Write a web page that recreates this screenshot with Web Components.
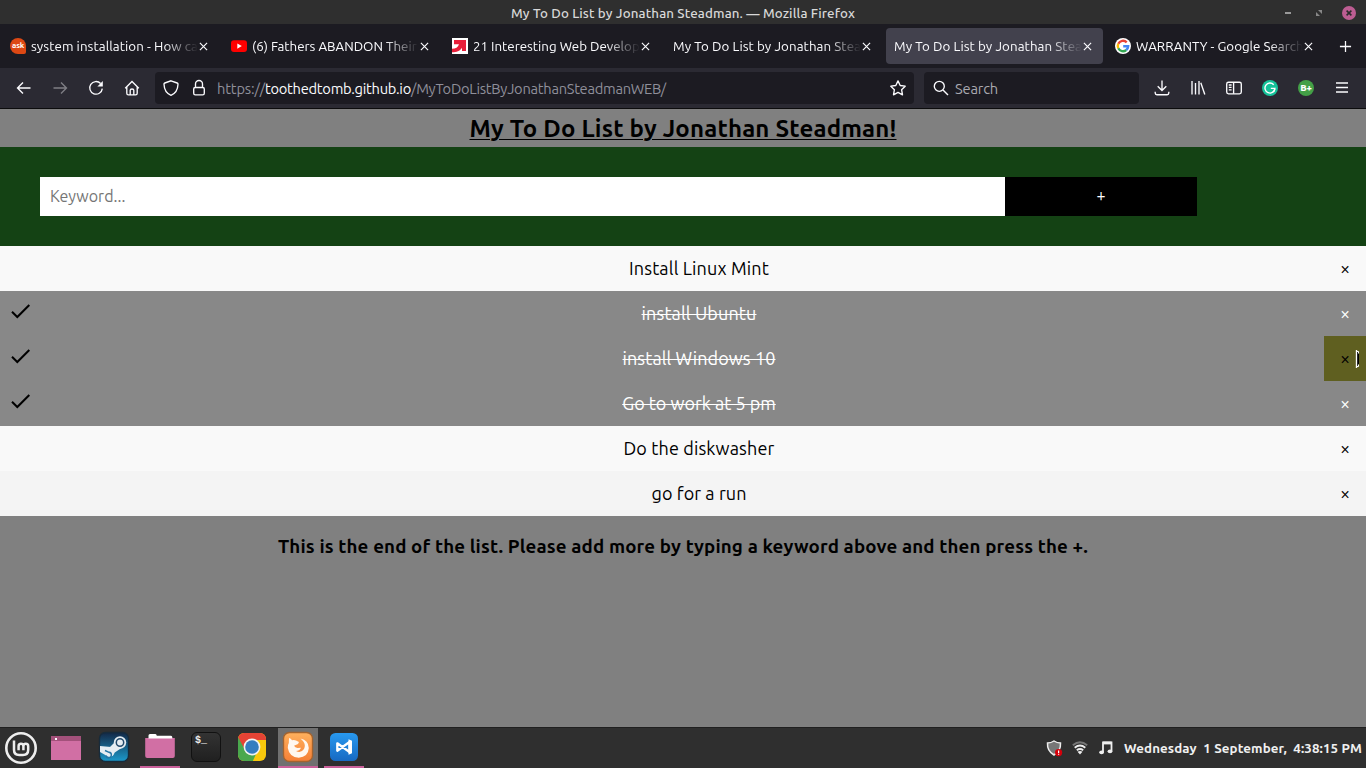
<!DOCTYPE html>
<html lang="en">
<head>
<meta charset="utf-8">
<title>My To Do List by Jonathan Steadman.</title>
<style>
html,body{margin:0;height:100%;overflow:hidden;background:#808080}
body{font-family:Ubuntu,"Noto Sans","Open Sans",sans-serif}
</style>
</head>
<body>
<desktop-screen></desktop-screen>
<script>
const define = (name, css, html, ready) => {
  const t = document.createElement('template');
  t.innerHTML = `<style>${css}</style>${html}`;
  customElements.define(name, class extends HTMLElement {
    constructor(){ super(); this.attachShadow({mode:'open'}).append(t.content.cloneNode(true)); }
    connectedCallback(){ if(ready) ready.call(this, this.shadowRoot); }
  });
};

/* Text run whose tracking is adjusted to a given width */
define('ui-text', `:host{display:inline-block;white-space:pre;flex:none}span{display:inline-block}
:host([line=under]) span{text-decoration:underline;text-decoration-thickness:1px;text-underline-offset:2px}
:host([line=through]) span{text-decoration:line-through;text-decoration-thickness:1px}`,
  `<span><slot></slot></span>`, function(r){
  const s = r.querySelector('span'), w = +this.getAttribute('fit'), n = [...this.textContent].length;
  if(w){ const ls=(w - s.getBoundingClientRect().width)/n; if(Math.abs(ls)>.07) s.style.letterSpacing = ls.toFixed(4)+'px'; }
});

const icons = {
  back:[16,'<path d="M1.5 8h13M7 2.5 1.5 8 7 13.5"/>'],
  forward:[16,'<path d="M1.5 8h13M9 2.5 14.500 8 9 13.5"/>'],
  reload:[16,'<path d="M12.600 3.500A6.300 6.300 0 1 0 14.300 8.600"/><path d="M14.800 1v5.400H9.400z" fill="currentColor" stroke="none"/>'],
  home:[16,'<path d="M1.200 8.300 8 1.500l6.800 6.800M2.800 7v6.200q0 1.600 1.600 1.600h7.200q1.600 0 1.600-1.600V7M6.200 14.500V10.200q0-1.200 1.800-1.200t1.800 1.200v4.300"/>'],
  shield:[16,'<path d="M8 .8 14.200 3q.9.300.8 1.300C14.800 9.600 12.300 13.600 8 15.300 3.700 13.600 1.200 9.600 1 4.300q-.1-1 .8-1.300z"/>'],
  lock:[16,'<rect x="2.700" y="7.500" width="10.600" height="7.300" rx="1.600"/><path d="M4.500 7.500V4a3.500 3.500 0 0 1 7 0v3.500"/>'],
  star:[16,'<path stroke-linejoin="round" d="m8 .9 2.200 4.600 5 .7-3.600 3.500.9 5.100L8 12.400l-4.500 2.400.9-5.100L.8 6.200l5-.7z"/>'],
  search:[16,'<circle cx="6.300" cy="6.300" r="5"/><path d="m10 10 5 5"/>'],
  download:[16,'<path d="M8 .5v9.800M3.700 6.300 8 10.600l4.300-4.300M1.200 11.800v1.200q0 1.700 1.700 1.700h10.200q1.700 0 1.700-1.700v-1.200"/>'],
  library:[16,'<path d="M2 1v13.500M5.500 3v11.500M9 1v13.500M10.800 2.800 14.800 14.500"/>'],
  sidebar:[16,'<rect x=".7" y="2.200" width="14.600" height="11.600" rx="1.800"/><path d="M7.600 2.200v11.600M2.800 5h2.800M2.800 7.400h2.800M2.800 9.800h2.800"/>'],
  menu:[16,'<path d="M2 3h12M2 7.500h12M2 12h12"/>'],
  plus:[14,'<path d="M7 1v12M1 7h12"/>'],
  close:[10,'<path d="m1 1 8 8M9 1 1 9"/>'],
  youtube:[16,'<rect y="2.300" width="16" height="11.600" rx="3" fill="red" stroke="none"/><path d="m6.300 5.500 4.500 2.600-4.500 2.600z" fill="#fff" stroke="none"/>'],
  arrow:[16,'<path d="M0 0h16v16H0z" fill="#fff" stroke="none"/><path d="M2 2h12v11h-4V9.800C7.500 13.200 5 14.300 0 14.300v-3.600c3.700 0 6-1.500 7-4.500H2z" fill="#e81f3a" stroke="none"/>'],
  google:[16,'<circle cx="8" cy="8" r="8" fill="#fff" stroke="none"/><g stroke-width="2.400"><path d="M11.700 4.300A5.200 5.200 0 0 0 3.300 5.700" stroke="#ea4335"/><path d="M3.300 5.700a5.200 5.200 0 0 0 0 4.600" stroke="#fbbc05"/><path d="M3.300 10.300a5.200 5.200 0 0 0 8 1.700" stroke="#34a853"/><path d="M11.300 12a5.200 5.200 0 0 0 1.900-3.800H8.200" stroke="#4285f4"/></g>'],
  grammarly:[16,'<circle cx="8" cy="8" r="8" fill="#15c39a" stroke="none"/><path d="M11.700 4.700A5 5 0 1 0 12.900 9" stroke="#fff" stroke-width="1.400"/><path d="M8.800 8.400h4.100l-1 3" stroke="#fff" stroke-width="1.300"/>'],
  check:[20,'<path d="m2 8.800 5.300 5.200L19.300 2" stroke="#000" stroke-width="2"/>'],
  mint:[32,'<circle cx="16" cy="16" r="14.700" stroke="#eee" stroke-width="2.600"/><path d="M9 8.500v9.300q0 5.200 5.200 5.200h3.800q5.200 0 5.200-5.200v-3.500q0-2.500-2.400-2.500t-2.400 2.500v4M18.400 14.300q0-2.500-2.400-2.500t-2.400 2.500v4" stroke="#eee" stroke-width="2.500"/>'],
  windowi:[32,'<path d="M1 4h30v24H1z" fill="#d16fa4" stroke="none"/><path d="M1 4h30v5H1z" fill="#a3517b" stroke="none"/><rect x="5" y="6" width="2" height="2" fill="#fff" stroke="none"/>'],
  folder:[32,'<path d="M1.200 7h29.600v18q0 2-2 2H3.200q-2 0-2-2z" fill="#d16fa4" stroke="none"/><path d="M4.500 5V4.500Q4.500 3 6 3h5.400q1.200 0 1.400 1.800H27q1.300 0 1.300 1.500V7.500H4.500z" fill="#fff" stroke="none"/>'],
  steam:[32,'<defs><linearGradient id="s" x2="0" y2="1"><stop stop-color="#132846"/><stop offset="1" stop-color="#1c9acb"/></linearGradient></defs><rect x="1.500" y="1.500" width="29" height="29" rx="6" fill="url(#s)" stroke="#172b3b"/><path d="M2 15v6l7 4 7-5-3-4z" fill="#e5edf2" stroke="none"/><path d="m11 17 8-8 6 7-9 6z" fill="#e5edf2" stroke="none"/><circle cx="22" cy="11.500" r="6.200" fill="#e5edf2" stroke="none"/><circle cx="22" cy="11.500" r="3.700" fill="#e5edf2" stroke="#244b6c" stroke-width="1.500"/><circle cx="11.500" cy="21" r="5" fill="#e5edf2" stroke="none"/><path d="m7 19.500 4 1.800a2.700 2.700 0 1 1-3 3" stroke="#2576a5" stroke-width="1.400"/>'],
  chrome:[32,'<defs><clipPath id="c"><rect x="2" y="2" width="28" height="28" rx="6"/></clipPath></defs><g clip-path="url(#c)" stroke="none"><path d="M0 0h32v32H0z" fill="#f8c80c"/><path d="M0 0h32v9H16L9 20 0 6z" fill="#e54335"/><path d="m2 6 7 13 11 4-4 9H0V6z" fill="#4aa84d"/><circle cx="16" cy="16" r="8.400" fill="#f2f2f2"/><circle cx="16" cy="16" r="6.800" fill="#347dc0"/></g>'],
  firefox:[32,'<defs><linearGradient id="f" x2="0" y2="1"><stop stop-color="#ffb15d"/><stop offset="1" stop-color="#f57f36"/></linearGradient></defs><rect x="1.500" y="1.500" width="29" height="29" rx="6" fill="url(#f)" stroke="#a2632f"/><path d="M7 7q2 .5 3 2.300 2-.8 4 .1l3 1.600-1 2-4 1.700q1 2 3.500 2.300l3.500-.2q-1.500 3.200-5 3.300 5 2.400 8-2.100 1.900-3.700-.5-7.200-1.500-2-3-3.300 8 1.500 8.300 9.500-.6 9-10 9.700-9.500-.4-11-9.700-.2-3 1-5z" fill="#fff8f0" stroke="none"/>'],
  code:[32,'<defs><linearGradient id="v" x2="0" y2="1"><stop stop-color="#2899ef"/><stop offset="1" stop-color="#1769c2"/></linearGradient></defs><rect x="2" y="2" width="28" height="28" rx="5.500" fill="url(#v)" stroke="none"/><path d="M9.300 12.300 21.500 21V11L9.300 19.700z" stroke="#fff" stroke-width="2.300" stroke-linejoin="round"/><path d="m20.500 8.300 3.500 1.500v12.400l-3.500 1.500z" fill="#fff" stroke="none"/>'],
  guard:[16,'<path d="M8 1q3 2 6.500 2 .5 8-6.500 12Q1 11 1.500 3 5 3 8 1z" fill="#777" stroke="#eee" stroke-width="1.500"/><circle cx="12.600" cy="12.600" r="3.600" fill="#d4000b" stroke="none"/><path d="M12.600 10.500v2.400m0 .8v1" stroke="#fff" stroke-width="1.200"/>'],
  wifi:[16,'<path d="M.8 5.200Q8-.8 15.200 5.200" stroke="#777" stroke-width="1.800"/><path d="M2.700 7.700q5.300-4.300 10.600 0M4.800 10.200q3.200-2.500 6.400 0" stroke="#eee" stroke-width="1.800"/><path d="m8 14.500-2.500-2.800q2.500-1.600 5 0z" fill="#eee" stroke="none"/>'],
  music:[16,'<path d="M5 12V2.500h8.500V11" stroke="#eee" stroke-width="1.800"/><path d="M5 3h8.500" stroke="#eee" stroke-width="2.800"/><ellipse cx="3.600" cy="12.300" rx="2.400" ry="1.900" fill="#eee" stroke="none"/><ellipse cx="12" cy="11.300" rx="2.400" ry="1.900" fill="#eee" stroke="none"/>'],
  caret:[16,'<path d="M.5.500 3 3v11L.5 17z" fill="#000" stroke="none"/><path d="M.5 0v18" stroke="#fff"/><path d="M1 1.500h1.500v2M1 16.500h1.500v-2" stroke="#fff" stroke-width="1"/>'],
  max:[8,'<path d="M3 1h4v4zM1 3v4h4z" fill="#888" stroke="none"/>']
};
define('ui-icon', `:host{display:block;flex:none;width:16px;height:16px}svg{display:block;width:100%;height:100%;overflow:visible;stroke-width:var(--w,1.35)}`,
  `<svg fill="none" stroke="currentColor"></svg>`, function(r){
  const [n,p]=icons[this.getAttribute('name')], s=r.querySelector('svg');
  s.setAttribute('viewBox',`0 0 ${n} ${n}`); s.innerHTML=p;
});

define('title-bar', `:host{display:grid;grid-template-columns:1fr auto 1fr;align-items:center;height:24px;background:#2f2f2f;color:#d8d8d8;font-size:13.330px;font-weight:500}
.title{grid-column:2;line-height:24px;padding-top:2px}.c{display:flex;justify-content:flex-end;align-items:center;padding-right:10px;color:#999}
.min{width:6px;height:2px;background:#999;margin-right:24px}.max{width:8px;height:8px;margin-right:19px}
.x{width:14px;height:14px;border-radius:50%;background:#bd5d92;display:grid;place-items:center;color:#2b2b2b}.x ui-icon{width:6px;height:6px;--w:2.600}`,
`<ui-text class="title" fit="344">My To Do List by Jonathan Steadman. — Mozilla Firefox</ui-text><div class="c"><i class="min"></i><ui-icon class="max" name="max"></ui-icon><span class="x"><ui-icon name="close"></ui-icon></span></div>`);

define('browser-tab', `:host{display:flex;align-items:center;box-sizing:border-box;width:217px;height:36px;padding:0 11.500px 0 8px;border-radius:4px;color:#fbfbfe;font-size:13.330px;flex:none}
:host([active]){background:#42414d}
.label{flex:1;min-width:0;overflow:hidden;white-space:nowrap;line-height:36px;padding-top:1px;-webkit-mask-image:linear-gradient(to left,transparent 0,#000 34px)}
::slotted([slot=icon]){margin-right:5px}.x{width:9px;height:9px;margin-left:1px;--w:1.300}`,
`<slot name="icon"></slot><div class="label"><slot></slot></div><ui-icon class="x" name="close"></ui-icon>`);
define('ask-icon', `:host{display:block;width:16px;height:16px;flex:none;background:#dd4814;border-radius:8px 8px 2px 8px;color:#fff;font-size:8px;font-weight:700;line-height:15px;text-align:center;letter-spacing:-.2px}`, `ask`);
define('grade-icon', `:host{display:block;width:16px;height:16px;flex:none;background:#43a047;border-radius:50%;color:#fff;font-size:9.500px;font-weight:800;line-height:16px;text-align:center}`, `B+`);

define('tab-strip', `:host{display:flex;align-items:center;gap:4px;height:44px;padding-left:2px;background:#1c1b22}.plus{width:13px;height:13px;margin-left:11px;color:#fbfbfe}`,
`<browser-tab><ask-icon slot="icon"></ask-icon><ui-text fit="167">system installation - How ca</ui-text></browser-tab>
<browser-tab><ui-icon slot="icon" name="youtube"></ui-icon><ui-text fit="165">(6) Fathers ABANDON Their</ui-text></browser-tab>
<browser-tab><ui-icon slot="icon" name="arrow"></ui-icon><ui-text fit="166">21 Interesting Web Develop</ui-text></browser-tab>
<browser-tab><ui-text fit="188">My To Do List by Jonathan Stea</ui-text></browser-tab>
<browser-tab active><ui-text fit="188">My To Do List by Jonathan Stea</ui-text></browser-tab>
<browser-tab><ui-icon slot="icon" name="google"></ui-icon><ui-text fit="168">WARRANTY - Google Search</ui-text></browser-tab>
<ui-icon class="plus" name="plus"></ui-icon>`);

define('nav-bar', `:host{display:flex;align-items:center;box-sizing:border-box;height:41px;padding:0 16px;background:#2b2a33;border-bottom:1px solid #0c0c0d;color:#fbfbfe;font-size:14.670px}
.nav{display:flex;gap:20px;width:139px}.dim{opacity:.4}
.box{display:flex;align-items:center;box-sizing:border-box;height:32px;background:#1c1b22;border-radius:4px}
.url{width:759px;padding:0 8px}.url ui-icon+ui-icon{margin:0 10px 0 12px}.url ui-text{color:#8f8f9a}.url ui-text.host{color:#fbfbfe}.url .star{margin-left:auto}
.search{width:215px;margin-left:10px;padding:0 9px;gap:6px}.search ui-text{color:#a9a9b0}ui-text{padding-top:1px}
.tools{display:flex;gap:20px;margin-left:auto}`,
`<div class="nav"><ui-icon name="back"></ui-icon><ui-icon class="dim" name="forward"></ui-icon><ui-icon name="reload"></ui-icon><ui-icon name="home"></ui-icon></div>
<div class="box url"><ui-icon name="shield"></ui-icon><ui-icon name="lock"></ui-icon><ui-text fit="48">https://</ui-text><ui-text class="host" fit="146">toothedtomb.github.io</ui-text><ui-text fit="255">/MyToDoListByJonathanSteadmanWEB/</ui-text><ui-icon class="star" name="star"></ui-icon></div>
<div class="box search"><ui-icon name="search"></ui-icon><ui-text fit="43">Search</ui-text></div>
<div class="tools"><ui-icon name="download"></ui-icon><ui-icon name="library"></ui-icon><ui-icon name="sidebar"></ui-icon><ui-icon name="grammarly"></ui-icon><grade-icon></grade-icon><ui-icon name="menu"></ui-icon></div>`);

define('todo-item', `:host{display:grid;grid-template-columns:40px 1fr 8px;align-items:start;position:relative;height:45px;background:#f9f9f9;color:#000;font-size:18px;text-align:center;line-height:44px}
:host([even]){background:#f4f4f4}:host([checked]){background:#888;color:#fff}
ui-icon{display:none;width:20px;height:20px;margin:12px 0 0 10px}:host([checked]) ui-icon.tick{display:block}
.tick{grid-column:1;grid-row:1}.label{grid-column:2;grid-row:1}
.close{position:absolute;right:0;top:0;width:42px;height:45px;font-size:18px;line-height:45px}
:host([hover]) .close{background:#5f5f20;color:#000}
ui-icon.cursor{position:absolute;right:-6px;top:14px;margin:0;width:16px;height:16px}:host([hover]) .cursor{display:block}`,
`<ui-icon class="tick" name="check"></ui-icon><div class="label"><slot></slot></div><span class="close">×<ui-icon class="cursor" name="caret"></ui-icon></span>`);

define('add-form', `:host{display:flex;box-sizing:border-box;height:99px;padding:30px 40px;background:#144214}
.in{box-sizing:border-box;width:965px;height:39px;background:#fff;padding-left:10px;color:#757575;font-size:16px;line-height:38px}
.btn{width:192px;height:39px;background:#000;color:#fff;font-size:16px;line-height:37px;text-align:center}`,
`<div class="in"><ui-text fit="76">Keyword...</ui-text></div><div class="btn">+</div>`);

define('todo-page', `:host{display:block;flex:1;background:#808080;color:#000}
h2{margin:0;box-sizing:border-box;height:38px;padding-top:1px;line-height:37px;font-size:24px;font-weight:700;text-align:center}
h2 ui-text{line-height:38px}
p{margin:0;padding-top:18px;line-height:25px;font-size:18.720px;font-weight:700;text-align:center}`,
`<h2><ui-text fit="427" line="under">My To Do List by Jonathan Steadman!</ui-text></h2><add-form></add-form>
<todo-item><ui-text fit="140">Install Linux Mint</ui-text></todo-item>
<todo-item checked><ui-text line="through" fit="115">install Ubuntu</ui-text></todo-item>
<todo-item checked hover><ui-text line="through" fit="153">install Windows 10</ui-text></todo-item>
<todo-item checked><ui-text line="through" fit="154">Go to work at 5 pm</ui-text></todo-item>
<todo-item><ui-text fit="151">Do the diskwasher</ui-text></todo-item>
<todo-item even><ui-text fit="95">go for a run</ui-text></todo-item>
<p><ui-text fit="810">This is the end of the list. Please add more by typing a keyword above and then press the +.</ui-text></p>`);

define('task-button', `:host{display:grid;place-items:center;box-sizing:border-box;width:40px;height:40px;border-bottom:2px solid transparent;flex:none}
:host([running]){border-bottom-color:#c9609a}:host([active]){background:#707070}::slotted(ui-icon){width:32px;height:32px}`, `<slot></slot>`);
define('terminal-icon', `:host{display:block;box-sizing:border-box;width:30px;height:30px;border:1px solid #111;border-radius:6px;background:linear-gradient(#333,#202020);color:#eee;font:700 10px/11px "Liberation Mono",monospace;padding:2px 3px}`, `$_`);
define('task-bar', `:host{display:flex;align-items:center;box-sizing:border-box;height:41px;border-top:1px solid #202020;background:#2f2f2f;color:#f0f0f0;font-size:13.330px;font-weight:700}
.apps{display:flex;padding-left:1px}.apps>:nth-child(2){margin-left:5px}.apps>:nth-child(n+3){margin-left:6px}.apps>:nth-child(3){margin-left:8px}.apps>:first-child,.apps>:nth-child(2){padding-top:2px}
.tray{display:flex;align-items:center;gap:10px;margin-left:auto;padding-right:4px}`,
`<div class="apps"><task-button><ui-icon name="mint"></ui-icon></task-button><task-button><ui-icon name="windowi"></ui-icon></task-button><task-button><ui-icon name="steam"></ui-icon></task-button><task-button running><ui-icon name="folder"></ui-icon></task-button><task-button><terminal-icon></terminal-icon></task-button><task-button><ui-icon name="chrome"></ui-icon></task-button><task-button running active><ui-icon name="firefox"></ui-icon></task-button><task-button running><ui-icon name="code"></ui-icon></task-button></div>
<div class="tray"><ui-icon name="guard"></ui-icon><ui-icon name="wifi"></ui-icon><ui-icon name="music"></ui-icon><ui-text fit="238">Wednesday  1 September,  4:38:15 PM</ui-text></div>`);

define('desktop-screen', `:host{display:flex;flex-direction:column;width:1366px;height:768px;overflow:hidden}`,
`<title-bar></title-bar><tab-strip></tab-strip><nav-bar></nav-bar><todo-page></todo-page><task-bar></task-bar>`);
</script>
</body>
</html>
